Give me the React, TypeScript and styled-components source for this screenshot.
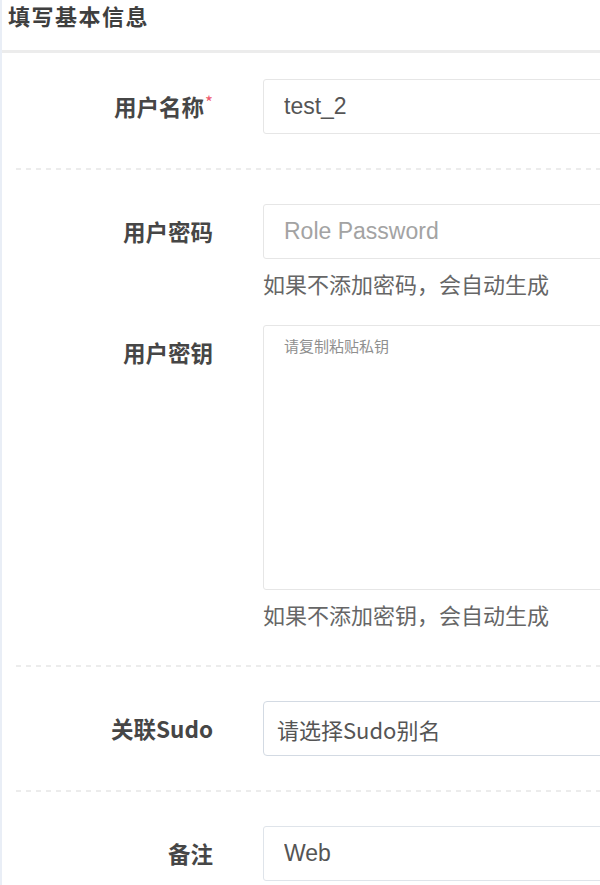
import React from "react";
import styled, { createGlobalStyle } from "styled-components";

const GlobalStyle = createGlobalStyle`
  html, body {
    margin: 0;
    padding: 0;
    background: #ffffff;
    overflow: hidden;
  }
  body {
    font-family: "Liberation Sans", "Noto Sans CJK SC", sans-serif;
  }
`;

const CJK = `"Noto Sans CJK SC", "Liberation Sans", sans-serif`;
const LATIN = `"Liberation Sans", "Noto Sans CJK SC", sans-serif`;

export default function App() {
  return (
    <>
      <GlobalStyle />
      <Page>
        <Panel>
          <PanelHeader>
            <PanelTitle>填写基本信息</PanelTitle>
          </PanelHeader>

          <Section $first>
            <FormRow>
              <Label>
                用户名称<Required>*</Required>
              </Label>
              <TextInput readOnly defaultValue="test_2" />
            </FormRow>
          </Section>

          <Divider />

          <Section>
            <FormRow>
              <Label>用户密码</Label>
              <FieldColumn>
                <TextInput readOnly placeholder="Role Password" />
                <HelpText>如果不添加密码，会自动生成</HelpText>
              </FieldColumn>
            </FormRow>
            <FormRow $spaced>
              <Label>用户密钥</Label>
              <FieldColumn>
                <KeyArea readOnly placeholder="请复制粘贴私钥" />
                <HelpText>如果不添加密钥，会自动生成</HelpText>
              </FieldColumn>
            </FormRow>
          </Section>

          <Divider />

          <Section>
            <FormRow>
              <Label>关联Sudo</Label>
              <SelectBox role="combobox">请选择Sudo别名</SelectBox>
            </FormRow>
          </Section>

          <Divider />

          <Section>
            <FormRow>
              <Label>备注</Label>
              <TextInput $tone="blue" readOnly defaultValue="Web" />
            </FormRow>
          </Section>
        </Panel>
      </Page>
    </>
  );
}

const Page = styled.div`
  width: 600px;
  height: 885px;
  overflow: hidden;
`;

const Panel = styled.div`
  width: 800px;
  min-height: 885px;
  border-left: 2px solid #e9eef6;
  box-sizing: border-box;
`;

const PanelHeader = styled.div`
  height: 50px;
  box-sizing: border-box;
  padding: 1px 0 0 6px;
  border-bottom: 3px solid #ececec;
  box-sizing: content-box;
  height: 49px;
`;

const PanelTitle = styled.h2`
  margin: 0;
  font-family: ${CJK};
  font-size: 22px;
  font-weight: 700;
  letter-spacing: 1.5px;
  line-height: 28px;
  color: #3f3f3f;
`;

const Section = styled.div<{ $first?: boolean }>`
  padding: ${({ $first }) => ($first ? "26px 0 34px" : "34px 0 34px")};
  display: flex;
  flex-direction: column;
`;

const Divider = styled.div`
  margin-left: 14px;
  height: 2px;
  background-image: repeating-linear-gradient(
    to right,
    #ececec 0 5px,
    transparent 5px 10px
  );
`;

const FormRow = styled.div<{ $spaced?: boolean }>`
  display: grid;
  grid-template-columns: 211px 480px;
  column-gap: 50px;
  align-items: start;
  margin-top: ${({ $spaced }) => ($spaced ? "25px" : "0")};
`;

const Label = styled.label`
  height: 55px;
  font-family: ${CJK};
  font-size: 22.5px;
  font-weight: 700;
  line-height: 55px;
  color: #464646;
  text-align: right;
  white-space: nowrap;
`;

const Required = styled.span`
  position: relative;
  top: -7px;
  margin-left: 1px;
  font-size: 17px;
  font-weight: 400;
  line-height: 0;
  color: #ee5a6e;
`;

const FieldColumn = styled.div`
  display: flex;
  flex-direction: column;
`;

const TextInput = styled.input<{ $tone?: "grey" | "blue" }>`
  height: 55px;
  box-sizing: border-box;
  padding: 0 20px;
  border: 1px solid
    ${({ $tone }) => ($tone === "blue" ? "#dfe4ea" : "#e6e6e6")};
  border-radius: 3px;
  font-family: ${LATIN};
  font-size: 23px;
  color: #555555;
  background: #ffffff;
  outline: none;

  &::placeholder {
    color: #a3a3a3;
  }
`;

const KeyArea = styled.textarea`
  height: 265px;
  box-sizing: border-box;
  padding: 9px 20px;
  border: 1px solid #e6e6e6;
  border-radius: 3px;
  resize: none;
  font-family: ${CJK};
  font-size: 15px;
  line-height: 22px;
  color: #555555;
  outline: none;

  &::placeholder {
    color: #8f8f8f;
  }
`;

const SelectBox = styled.div`
  height: 55px;
  box-sizing: border-box;
  padding: 0 13px;
  border: 1px solid #d3dae3;
  border-radius: 4px;
  display: flex;
  align-items: center;
  font-family: ${CJK};
  font-size: 22px;
  color: #555555;
  background: #ffffff;
`;

const HelpText = styled.div`
  margin-top: 7px;
  font-family: ${CJK};
  font-size: 22px;
  line-height: 34px;
  color: #666666;
`;
